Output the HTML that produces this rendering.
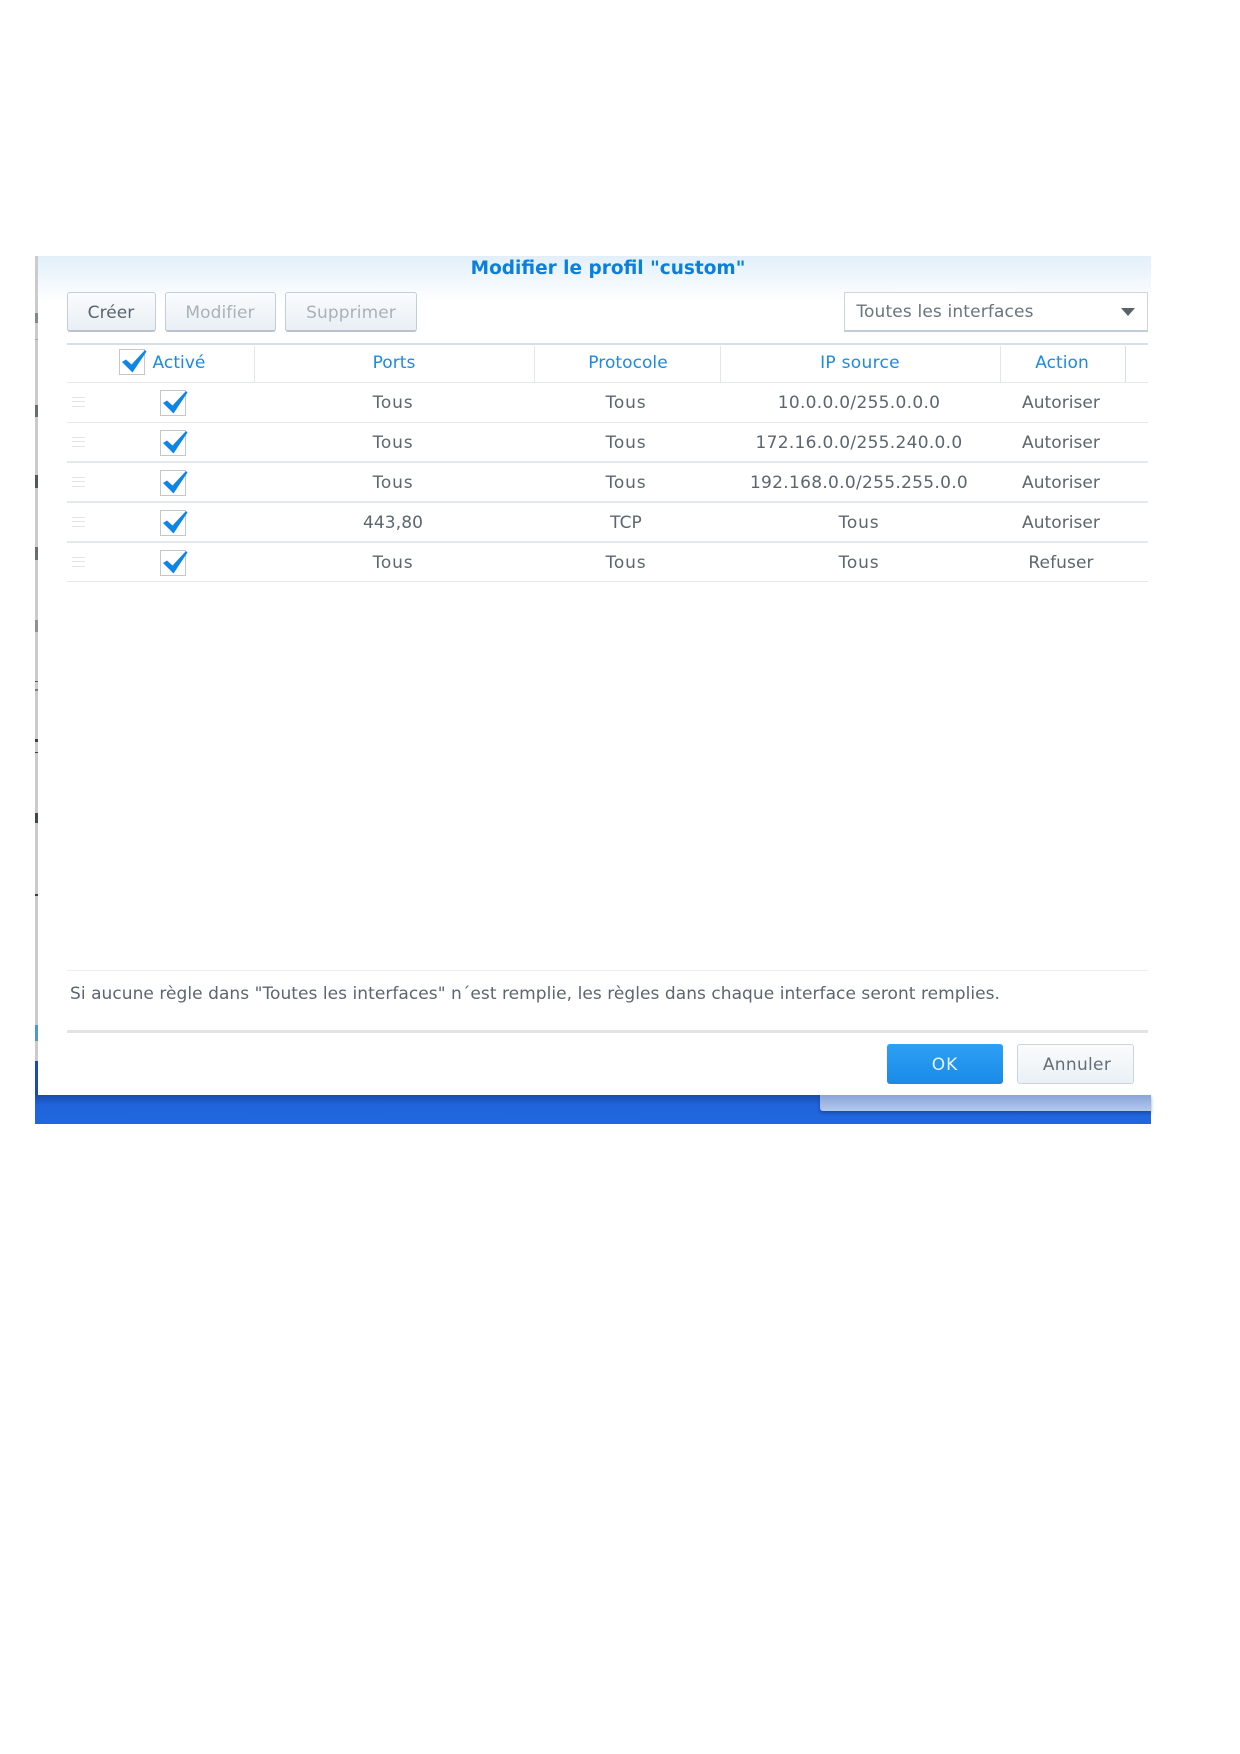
<!DOCTYPE html>
<html lang="fr"><head><meta charset="utf-8"><title>Modifier le profil "custom"</title>
<style>
html,body{margin:0;padding:0;background:#fff}
body{width:1240px;height:1754px;position:relative;overflow:hidden;font-family:"DejaVu Sans","Liberation Sans",sans-serif;color:#5b666f}
.a{position:absolute}
.t{position:absolute;white-space:nowrap;transform:translate(-50%,-50%);font-size:17px;line-height:20px;letter-spacing:.05px;filter:blur(.3px)}
.h{color:#1a8ae4}
.w{letter-spacing:.8px}
.ip{letter-spacing:.3px}
.btn{position:absolute;top:292px;height:37px;border:1px solid #c4ced8;border-bottom:2px solid #b8c3cf;border-radius:3px;background:linear-gradient(#fafcfd,#e9eff5);box-sizing:content-box}
.line{position:absolute;left:67px;width:1081px;height:1px;background:#e6e9ec}
.sep{position:absolute;top:346px;height:36px;width:1px;background:#e0e7ee}
.cb{position:absolute;width:26px;height:26px;overflow:visible}
.dh{position:absolute;left:72px;width:13px;height:10px;border-top:1px solid #e2e5e8;border-bottom:1px solid #e2e5e8;box-sizing:border-box}
.dh:after{content:"";position:absolute;left:0;right:0;top:3px;height:1px;background:#e2e5e8}
.m{position:absolute;left:35px;width:3px;background:#55585b}
</style></head><body>
<div class="a" style="left:35px;top:256px;width:3px;height:805px;background:#c9cbcd"></div>
<div class="m" style="top:313px;height:10px;background:#85888b"></div>
<div class="m" style="top:339px;height:1px;background:#a5a7a9"></div>
<div class="m" style="top:405px;height:12px;background:#6a6d70"></div>
<div class="m" style="top:475px;height:13px"></div>
<div class="m" style="top:547px;height:13px;background:#6a6d70"></div>
<div class="m" style="top:620px;height:12px;background:#8f9194"></div>
<div class="m" style="top:681px;height:1px"></div>
<div class="m" style="top:689px;height:2px;background:#7a7d80"></div>
<div class="m" style="top:739px;height:3px;background:#3c3f42"></div>
<div class="m" style="top:752px;height:1px;background:#3c3f42"></div>
<div class="m" style="top:813px;height:10px;background:#44474a"></div>
<div class="m" style="top:894px;height:2px;background:#3c3f42"></div>
<div class="a" style="left:35px;top:1025px;width:3px;height:16px;background:#4f9ac0"></div>
<div class="a" style="left:35px;top:1061px;width:3px;height:34px;background:#1c4ba8"></div>
<div class="a" style="left:35px;top:1095px;width:1116px;height:29px;background:linear-gradient(#1b4cab,#2064dc 35%,#2067de)"></div>
<div class="a" style="left:820px;top:1095px;width:331px;height:16px;background:linear-gradient(#8aa5da,#b4c8ea);border-radius:0 0 0 3px;box-shadow:0 2px 3px rgba(10,40,110,.45)"></div>
<div class="a" style="left:38px;top:256px;width:1113px;height:839px;background:#fff"></div>
<div class="a" style="left:38px;top:256px;width:1113px;height:46px;background:linear-gradient(#e2effa,#fff)"></div>
<div class="t" style="left:608px;top:269px;font-weight:bold;font-size:18.5px;color:#0a80dc;letter-spacing:0">Modifier le profil "custom"</div>

<div class="btn" style="left:67px;width:87px"></div><div class="t" style="left:111px;top:313px;color:#59646e">Créer</div>
<div class="btn" style="left:165px;width:109px"></div><div class="t" style="left:220px;top:313px;color:#a9b1b9">Modifier</div>
<div class="btn" style="left:285px;width:130px"></div><div class="t" style="left:351px;top:313px;color:#a9b1b9;letter-spacing:.1px">Supprimer</div>
<div class="a" style="left:844px;top:292px;width:302px;height:37px;background:#fff;border:1px solid #ccd4dc;border-bottom:2px solid #c2ccd6"></div>
<div class="t" style="left:945px;top:312px;color:#6a747d;letter-spacing:.15px">Toutes les interfaces</div>
<svg class="a" style="left:1120px;top:307px" width="16" height="10"><path d="M1 1H15L8 9Z" fill="#58636e"/></svg>

<div class="a" style="left:67px;top:343px;width:1081px;height:2px;background:#d6dfe8"></div>
<div class="sep" style="left:254px"></div><div class="sep" style="left:534px"></div><div class="sep" style="left:720px"></div><div class="sep" style="left:1000px"></div><div class="sep" style="left:1125px;background:#d6dfe8"></div>
<div class="line" style="top:382px"></div><div class="line" style="top:422px"></div><div class="line" style="top:461px;height:2px"></div><div class="line" style="top:501px;height:2px"></div><div class="line" style="top:541px;height:2px"></div><div class="line" style="top:581px"></div>

<svg class="cb" style="left:119px;top:349px"><rect x=".5" y=".5" width="25" height="25" fill="#fff" stroke="#c4c8cc"/><path d="M3 13L7 10.5L12.5 15.5L26 1L27.5 2.5L13.5 23.5Z" fill="#0f86e6"/></svg>
<div class="t h" style="left:179px;top:363px">Activé</div>
<div class="t h" style="left:394px;top:363px">Ports</div>
<div class="t h" style="left:628px;top:363px">Protocole</div>
<div class="t h ip" style="left:860px;top:363px">IP source</div>
<div class="t h" style="left:1062px;top:363px">Action</div>

<div class="dh" style="top:397px"></div>
<svg class="cb" style="left:160px;top:390px"><rect x=".5" y=".5" width="25" height="25" fill="#fff" stroke="#c4c8cc"/><path d="M3 13L7 10.5L12.5 15.5L26 1L27.5 2.5L13.5 23.5Z" fill="#0f86e6"/></svg>
<div class="t w" style="left:393px;top:403px">Tous</div><div class="t w" style="left:626px;top:403px">Tous</div><div class="t ip" style="left:859px;top:403px">10.0.0.0/255.0.0.0</div><div class="t" style="left:1061px;top:403px">Autoriser</div>

<div class="dh" style="top:437px"></div>
<svg class="cb" style="left:160px;top:430px"><rect x=".5" y=".5" width="25" height="25" fill="#fff" stroke="#c4c8cc"/><path d="M3 13L7 10.5L12.5 15.5L26 1L27.5 2.5L13.5 23.5Z" fill="#0f86e6"/></svg>
<div class="t w" style="left:393px;top:443px">Tous</div><div class="t w" style="left:626px;top:443px">Tous</div><div class="t ip" style="left:859px;top:443px">172.16.0.0/255.240.0.0</div><div class="t" style="left:1061px;top:443px">Autoriser</div>

<div class="dh" style="top:477px"></div>
<svg class="cb" style="left:160px;top:470px"><rect x=".5" y=".5" width="25" height="25" fill="#fff" stroke="#c4c8cc"/><path d="M3 13L7 10.5L12.5 15.5L26 1L27.5 2.5L13.5 23.5Z" fill="#0f86e6"/></svg>
<div class="t w" style="left:393px;top:483px">Tous</div><div class="t w" style="left:626px;top:483px">Tous</div><div class="t ip" style="left:859px;top:483px">192.168.0.0/255.255.0.0</div><div class="t" style="left:1061px;top:483px">Autoriser</div>

<div class="dh" style="top:517px"></div>
<svg class="cb" style="left:160px;top:510px"><rect x=".5" y=".5" width="25" height="25" fill="#fff" stroke="#c4c8cc"/><path d="M3 13L7 10.5L12.5 15.5L26 1L27.5 2.5L13.5 23.5Z" fill="#0f86e6"/></svg>
<div class="t" style="left:393px;top:523px;letter-spacing:.1px">443,80</div><div class="t" style="left:626px;top:523px">TCP</div><div class="t w" style="left:859px;top:523px">Tous</div><div class="t" style="left:1061px;top:523px">Autoriser</div>

<div class="dh" style="top:557px"></div>
<svg class="cb" style="left:160px;top:550px"><rect x=".5" y=".5" width="25" height="25" fill="#fff" stroke="#c4c8cc"/><path d="M3 13L7 10.5L12.5 15.5L26 1L27.5 2.5L13.5 23.5Z" fill="#0f86e6"/></svg>
<div class="t w" style="left:393px;top:563px">Tous</div><div class="t w" style="left:626px;top:563px">Tous</div><div class="t w" style="left:859px;top:563px">Tous</div><div class="t" style="left:1061px;top:563px;letter-spacing:.1px">Refuser</div>

<div class="line" style="top:970px;background:#eceef0"></div>
<div class="t" style="left:70px;top:994px;transform:translateY(-50%)">Si aucune règle dans "Toutes les interfaces" n´est remplie, les règles dans chaque interface seront remplies.</div>
<div class="a" style="left:67px;top:1030px;width:1081px;height:3px;background:#e2e3e4"></div>
<div class="a" style="left:887px;top:1044px;width:116px;height:40px;border-radius:3px;background:linear-gradient(#2da0f5,#1a8ae6)"></div>
<div class="t" style="left:945px;top:1065px;color:#e6f3fd;letter-spacing:1px">OK</div>
<div class="a" style="left:1017px;top:1044px;width:115px;height:38px;border:1px solid #cdd5dc;border-radius:3px;background:linear-gradient(#fafcfd,#eaf0f5)"></div>
<div class="t" style="left:1077px;top:1065px;color:#636e78;letter-spacing:.3px">Annuler</div>
</body></html>
